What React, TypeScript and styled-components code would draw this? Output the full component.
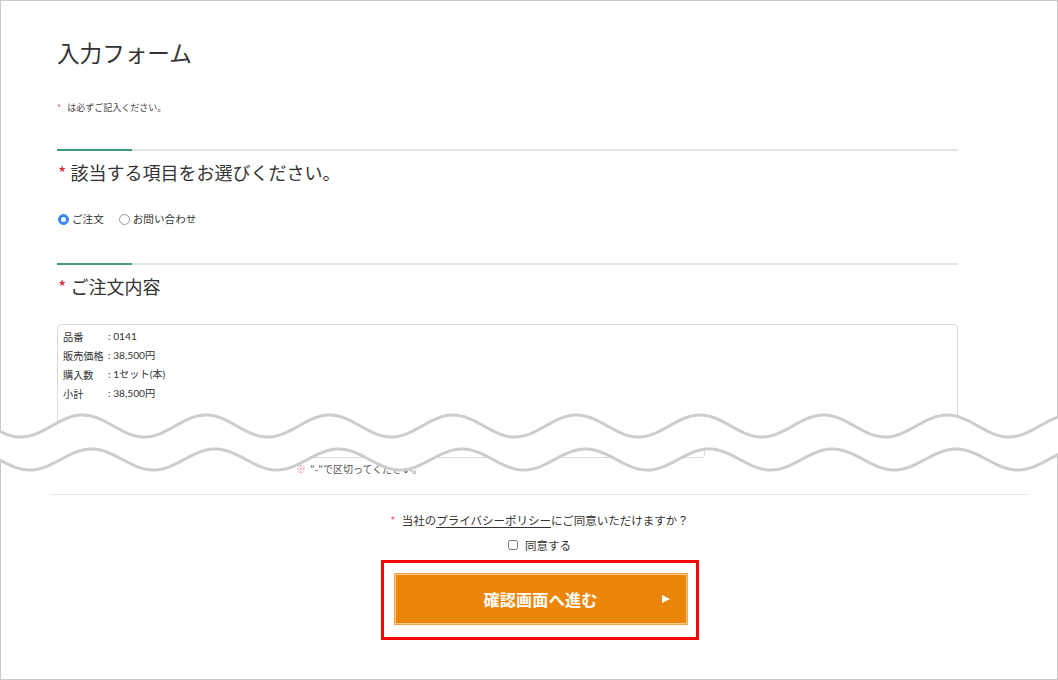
import React from "react";
import styled, { createGlobalStyle } from "styled-components";

const Global = createGlobalStyle`
  html, body { margin: 0; padding: 0; background: #fff; }
  body {
    font-family: "Lato", "Noto Sans CJK JP", "Noto Sans", sans-serif;
    color: #333;
  }
  * { box-sizing: border-box; }
`;

const Frame = styled.div`
  position: relative;
  width: 1058px;
  height: 680px;
  border: 1px solid #c9c9c9;
  background: #fff;
`;

const Upper = styled.section`
  display: flex;
  flex-direction: column;
  padding: 0 99px 0 56px;
`;

const Title = styled.h1`
  margin: 36px 0 0;
  font-family: "Noto Sans CJK JP", sans-serif;
  font-size: 22.6px;
  line-height: 32px;
  font-weight: 400;
  color: #333;
`;

const Req = styled.span<{ $strong?: boolean }>`
  color: ${(p) => (p.$strong ? "#d8283f" : "#e86f82")};
  margin-right: ${(p) => (p.$strong ? "4px" : "6px")};
`;

const RequiredNote = styled.p`
  margin: 32px 0 0;
  font-family: "Noto Sans CJK JP", sans-serif;
  font-size: 9px;
  line-height: 14px;
  color: #444;
`;

const Divider = styled.div<{ $top: number }>`
  display: flex;
  margin-top: ${(p) => p.$top}px;
  height: 2px;
`;

const DividerAccent = styled.span`
  width: 75px;
  height: 2px;
  background: #3f9b7e;
`;

const DividerRest = styled.span`
  flex: 1;
  height: 2px;
  background: #e4e4e4;
`;

const Heading = styled.h2`
  margin: 8px 0 0;
  font-family: "Noto Sans CJK JP", sans-serif;
  font-size: 18px;
  line-height: 26px;
  font-weight: 400;
  color: #333;
  padding-left: 1px;
`;

const RadioGroup = styled.div`
  display: flex;
  align-items: center;
  gap: 15px;
  margin-top: 26px;
  height: 16px;
  padding-left: 1px;
`;

const RadioLabel = styled.label`
  display: flex;
  align-items: center;
  gap: 3px;
  font-family: "Noto Sans CJK JP", sans-serif;
  font-size: 10.6px;
  line-height: 16px;
  color: #333;
`;

const Radio = styled.input`
  appearance: none;
  width: 11px;
  height: 11px;
  margin: 0;
  border-radius: 50%;
  border: 1px solid #9a9a9a;
  background: #fff;

  &:checked {
    border-color: #2f80ed;
    background: #2f80ed;
    box-shadow: inset 0 0 0 2px #2f80ed, inset 0 0 0 5px #fff;
  }
`;

const OrderBox = styled.div`
  margin-top: 25px;
  height: 118px;
  border: 1px solid #dcdcdc;
  border-radius: 4px;
  padding: 2px 5px;
  display: grid;
  grid-template-columns: 45px 1fr;
  align-content: start;
  font-size: 10.2px;
  line-height: 19px;
  color: #333;
`;

const OrderLabel = styled.span`
  font-family: "Noto Sans CJK JP", sans-serif;
`;

const OrderValue = styled.span`
  font-family: "Lato", "Noto Sans CJK JP", sans-serif;
`;

const PhoneInput = styled.div`
  margin: 2px 0 0 239px;
  width: 409px;
  height: 14px;
  border: 1px solid #dcdcdc;
  border-radius: 3px;
`;

const FieldNote = styled.p`
  margin: 4px 0 0 239px;
  font-family: "Noto Sans CJK JP", sans-serif;
  font-size: 10px;
  line-height: 14px;
  color: #555;
`;

const NoteMark = styled.span`
  color: #ee8494;
  margin-right: 4px;
`;

const Lower = styled.section`
  display: flex;
  flex-direction: column;
  align-items: center;
  padding: 0 29px 0 50px;
`;

const LowerRule = styled.div`
  align-self: stretch;
  margin-top: 18px;
  height: 1px;
  background: #e6e6e6;
`;

const Consent = styled.p`
  margin: 16px 0 0;
  font-family: "Noto Sans CJK JP", sans-serif;
  font-size: 11.5px;
  line-height: 18px;
  color: #333;
`;

const PolicyLink = styled.a`
  color: #333;
  text-decoration: underline;
  text-underline-offset: 2px;
`;

const AgreeRow = styled.label`
  display: flex;
  align-items: center;
  gap: 7px;
  margin-top: 7px;
  font-family: "Noto Sans CJK JP", sans-serif;
  font-size: 11.5px;
  line-height: 18px;
  color: #333;
`;

const Checkbox = styled.input`
  width: 10px;
  height: 10px;
  margin: 0;
`;

const Highlight = styled.div`
  margin-top: 6px;
  border: 3px solid #ff0000;
  padding: 10px 8px 12px 10px;
`;

const SubmitButton = styled.button`
  display: grid;
  grid-template-columns: 1fr auto 1fr;
  align-items: center;
  width: 294px;
  height: 52px;
  padding: 0;
  background: #ec860b;
  border: 1px solid #f3a648;
  box-shadow: inset 0 0 0 1px #f8c98c;
  color: #fff;
  font-family: "Noto Sans CJK JP", sans-serif;
  font-size: 16px;
  font-weight: 700;
  cursor: pointer;
`;

const ButtonText = styled.span`
  grid-column: 2;
  letter-spacing: 0.3px;
`;

const ButtonArrow = styled.span`
  grid-column: 3;
  justify-self: end;
  margin-right: 17px;
  width: 0;
  height: 0;
  border-left: 8px solid #fff;
  border-top: 4px solid transparent;
  border-bottom: 4px solid transparent;
`;

const WaveLayer = styled.svg`
  position: absolute;
  left: -1px;
  top: 399px;
  width: 1058px;
  height: 80px;
  pointer-events: none;
`;

const PERIOD = 123.5;
const wave = (x: number, mid: number, amp: number, peak: number) =>
  mid - amp * Math.cos((2 * Math.PI * (x - peak)) / PERIOD);

const xs: number[] = [];
for (let x = -4; x <= 1064; x += 2) xs.push(x);
const top = xs.map((x) => [x, wave(x + 1, 26, 11, 83.5)] as const);
const bottom = xs.map((x) => [x, wave(x + 1, 59.5, 10.5, 92.5)] as const);
const toLine = (pts: readonly (readonly [number, number])[]) =>
  pts.map(([x, y], i) => `${i ? "L" : "M"}${x} ${y.toFixed(2)}`).join(" ");
const topPath = toLine(top);
const bottomPath = toLine(bottom);
const fillPath =
  topPath +
  " " +
  [...bottom]
    .reverse()
    .map(([x, y]) => `L${x} ${y.toFixed(2)}`)
    .join(" ") +
  " Z";

const orderRows: [string, string][] = [
  ["品番", ": 0141"],
  ["販売価格", ": 38,500円"],
  ["購入数", ": 1セット(本)"],
  ["小計", ": 38,500円"],
];

export default function App() {
  return (
    <>
      <Global />
      <Frame>
        <Upper>
          <Title>入力フォーム</Title>
          <RequiredNote>
            <Req>*</Req>は必ずご記入ください。
          </RequiredNote>
          <Divider $top={34}>
            <DividerAccent />
            <DividerRest />
          </Divider>
          <Heading>
            <Req $strong>*</Req>該当する項目をお選びください。
          </Heading>
          <RadioGroup>
            <RadioLabel>
              <Radio type="radio" name="kind" defaultChecked />
              ご注文
            </RadioLabel>
            <RadioLabel>
              <Radio type="radio" name="kind" />
              お問い合わせ
            </RadioLabel>
          </RadioGroup>
          <Divider $top={36}>
            <DividerAccent />
            <DividerRest />
          </Divider>
          <Heading>
            <Req $strong>*</Req>ご注文内容
          </Heading>
          <OrderBox>
            {orderRows.map(([label, value]) => (
              <React.Fragment key={label}>
                <OrderLabel>{label}</OrderLabel>
                <OrderValue>{value}</OrderValue>
              </React.Fragment>
            ))}
          </OrderBox>
          <PhoneInput />
          <FieldNote>
            <NoteMark>※</NoteMark>"-"で区切ってください。
          </FieldNote>
        </Upper>
        <Lower>
          <LowerRule />
          <Consent>
            <Req>*</Req>当社の<PolicyLink href="#">プライバシーポリシー</PolicyLink>
            にご同意いただけますか？
          </Consent>
          <AgreeRow>
            <Checkbox type="checkbox" />
            同意する
          </AgreeRow>
          <Highlight>
            <SubmitButton type="button">
              <ButtonText>確認画面へ進む</ButtonText>
              <ButtonArrow />
            </SubmitButton>
          </Highlight>
        </Lower>
        <WaveLayer viewBox="0 0 1058 80" aria-hidden="true">
          <path d={fillPath} fill="#fff" />
          <path d={topPath} fill="none" stroke="#cdcdcd" strokeWidth={3} />
          <path d={bottomPath} fill="none" stroke="#cdcdcd" strokeWidth={3} />
        </WaveLayer>
      </Frame>
    </>
  );
}
